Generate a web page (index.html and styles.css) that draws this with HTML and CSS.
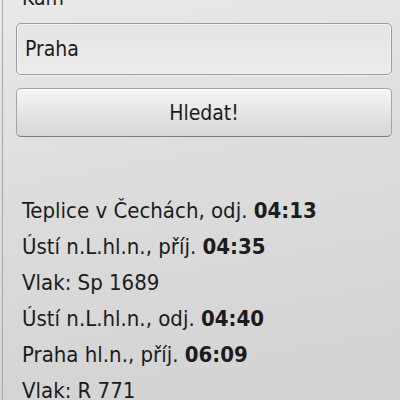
FILE: index.html
```html
<!DOCTYPE html>
<html lang="cs">
<head>
    <meta charset="UTF-8">
    <title>Spojení</title>
    <link rel="stylesheet" href="styles.css">
</head>
<body>
    <div class="page">
        <label class="field-label" for="kam">Kam</label>
        <input type="text" id="kam" class="field" value="Praha">
        <button class="search-btn">Hledat!</button>

        <ul class="result">
            <li>Teplice v Čechách, odj. <b>04:13</b></li>
            <li>Ústí n.L.hl.n., příj. <b>04:35</b></li>
            <li>Vlak: Sp 1689</li>
            <li>Ústí n.L.hl.n., odj. <b>04:40</b></li>
            <li>Praha hl.n., příj. <b>06:09</b></li>
            <li>Vlak: R 771</li>
        </ul>
    </div>
</body>
</html>
```

FILE: styles.css
```css
html, body {
    margin: 0;
    height: 100%;
    overflow: hidden;
}

body {
    font-family: "DejaVu Sans", sans-serif;
    font-stretch: condensed;
    color: #1c1c1c;
    background: linear-gradient(170deg, #e9e9e9 0%, #dcdcdc 45%, #d2d2d2 100%);
}

.page {
    margin-left: 2px;
    margin-top: -13px;
    border-left: 1px solid #a8a8a8;
    height: calc(100% + 13px);
    padding: 0 8px 0 13px;
}

.field-label {
    display: block;
    font-size: 21px;
    line-height: 22px;
    height: 22px;
    padding-left: 6px;
    color: #222;
}

.field {
    display: block;
    box-sizing: border-box;
    width: 376px;
    height: 52px;
    margin-top: 14px;
    padding: 0 8px;
    font-family: inherit;
    font-stretch: condensed;
    font-size: 21px;
    color: #1c1c1c;
    border: 1px solid #9a9a9a;
    border-radius: 5px;
    background: linear-gradient(#e4e4e4, #ececec);
    box-shadow: inset 0 0 0 1px #f3f3f3, 0 1px 0 #f2f2f2;
    outline: none;
}

.search-btn {
    display: block;
    box-sizing: border-box;
    width: 376px;
    height: 49px;
    margin-top: 13px;
    font-family: inherit;
    font-stretch: condensed;
    font-size: 21px;
    color: #1c1c1c;
    border: 1px solid #a4a4a4;
    border-bottom-color: #7c7c7c;
    border-radius: 5px;
    background: linear-gradient(#f5f5f5, #e2e2e2 60%, #d6d6d6);
    box-shadow: inset 0 1px 0 #fbfbfb;
}

.result {
    list-style: none;
    margin: 56px 0 0;
    padding: 0 0 0 6px;
    font-size: 22px;
    line-height: 36px;
}

.result b {
    font-weight: bold;
}
```
